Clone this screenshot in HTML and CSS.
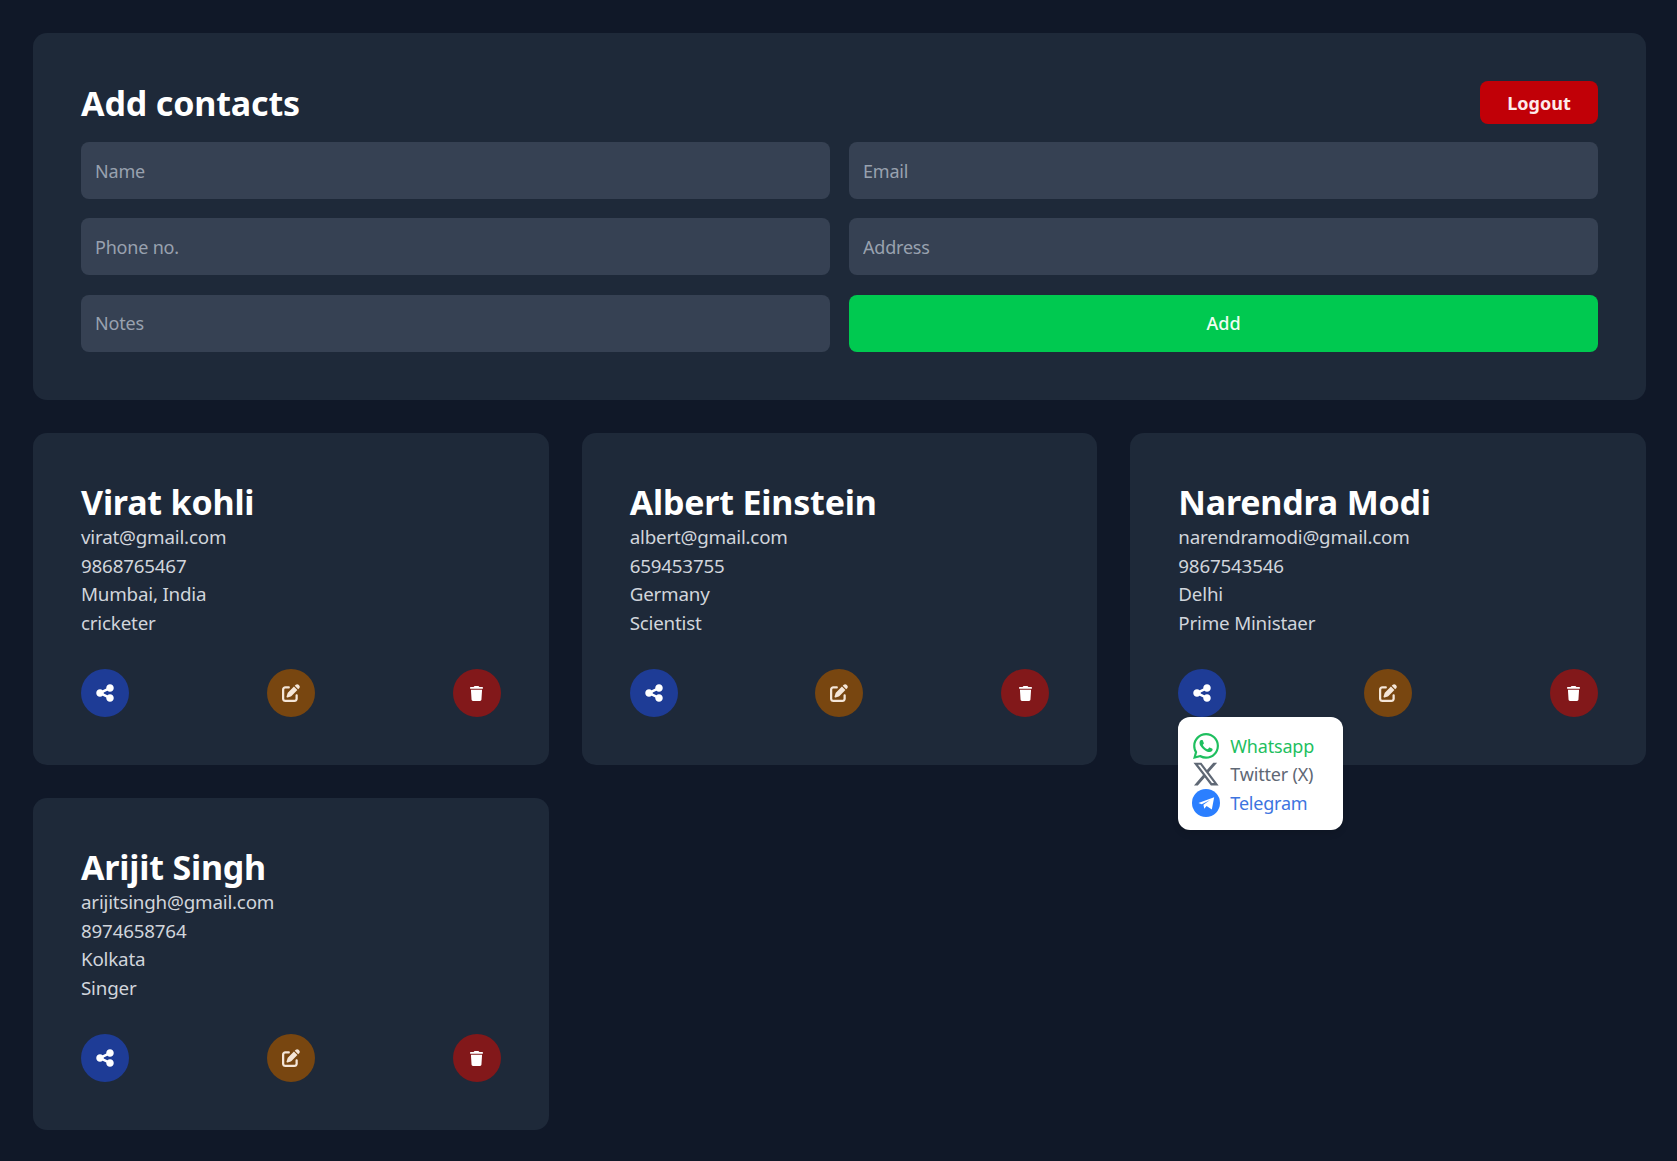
FILE: index.html
```html
<!DOCTYPE html>
<html lang="en">
<head>
<meta charset="utf-8">
<title>Contacts</title>
<link rel="stylesheet" href="styles.css">
</head>
<body>
<svg class="defs" aria-hidden="true">
  <symbol id="i-share" viewBox="0 0 448 512"><path d="M352 224c53 0 96-43 96-96s-43-96-96-96s-96 43-96 96c0 4 .2 8 .7 11.9l-94.1 47C145.4 170.2 121.9 160 96 160c-53 0-96 43-96 96s43 96 96 96c25.9 0 49.4-10.2 66.6-26.9l94.1 47c-.5 3.9-.7 7.8-.7 11.9c0 53 43 96 96 96s96-43 96-96s-43-96-96-96c-25.9 0-49.4 10.2-66.6 26.9l-94.1-47c.5-3.9 .7-7.8 .7-11.9s-.2-8-.7-11.9l94.1-47C302.6 213.8 326.1 224 352 224z"/></symbol>
  <symbol id="i-edit" viewBox="0 0 512 512"><path d="M471.6 21.7c-21.9-21.9-57.3-21.9-79.2 0L362.3 51.7l97.9 97.9 30.1-30.1c21.9-21.9 21.9-57.3 0-79.2L471.6 21.7zm-299.2 220c-6.1 6.1-10.8 13.6-13.5 21.9l-29.6 88.8c-2.9 8.6-.6 18.1 5.8 24.6s15.9 8.7 24.6 5.8l88.8-29.6c8.2-2.7 15.7-7.4 21.9-13.5L437.7 172.3 339.7 74.3 172.4 241.7zM96 64C43 64 0 107 0 160V416c0 53 43 96 96 96H352c53 0 96-43 96-96V320c0-17.7-14.3-32-32-32s-32 14.3-32 32v96c0 17.7-14.3 32-32 32H96c-17.7 0-32-14.3-32-32V160c0-17.7 14.3-32 32-32h96c17.7 0 32-14.3 32-32s-14.3-32-32-32H96z"/></symbol>
  <symbol id="i-trash" viewBox="0 0 448 512"><path d="M135.2 17.7L128 32H32C14.3 32 0 46.3 0 64S14.3 96 32 96H416c17.7 0 32-14.3 32-32s-14.3-32-32-32H320l-7.2-14.3C307.4 6.8 296.3 0 284.2 0H163.8c-12.1 0-23.2 6.8-28.6 17.7zM416 128H32L53.2 467c1.6 25.3 22.6 45 47.9 45H346.9c25.3 0 46.3-19.7 47.9-45L416 128z"/></symbol>
  <symbol id="i-whatsapp" viewBox="0 0 24 24"><path d="M17.472 14.382c-.297-.149-1.758-.867-2.03-.967-.273-.099-.471-.148-.67.15-.197.297-.767.966-.94 1.164-.173.199-.347.223-.644.075-.297-.15-1.255-.463-2.39-1.475-.883-.788-1.48-1.761-1.653-2.059-.173-.297-.018-.458.13-.606.134-.133.298-.347.446-.52.149-.174.198-.298.298-.497.099-.198.05-.371-.025-.52-.075-.149-.669-1.612-.916-2.207-.242-.579-.487-.5-.669-.51-.173-.008-.371-.01-.57-.01-.198 0-.52.074-.792.372-.272.297-1.04 1.016-1.04 2.479 0 1.462 1.065 2.875 1.213 3.074.149.198 2.096 3.2 5.077 4.487.709.306 1.262.489 1.694.625.712.227 1.36.195 1.871.118.571-.085 1.758-.719 2.006-1.413.248-.694.248-1.289.173-1.413-.074-.124-.272-.198-.57-.347m-5.421 7.403h-.004a9.87 9.87 0 01-5.031-1.378l-.361-.214-3.741.982.998-3.648-.235-.374a9.86 9.86 0 01-1.51-5.26c.001-5.45 4.436-9.884 9.888-9.884 2.64 0 5.122 1.03 6.988 2.898a9.825 9.825 0 012.893 6.994c-.003 5.45-4.437 9.884-9.885 9.884m8.413-18.297A11.815 11.815 0 0012.05 0C5.495 0 .16 5.335.157 11.892c0 2.096.547 4.142 1.588 5.945L.057 24l6.305-1.654a11.882 11.882 0 005.683 1.448h.005c6.554 0 11.89-5.335 11.893-11.893a11.821 11.821 0 00-3.48-8.413Z"/></symbol>
  <symbol id="i-x" viewBox="0 0 24 24"><path d="M18.244 2.25h3.308l-7.227 8.26 8.502 11.24H16.17l-5.214-6.817L4.99 21.75H1.68l7.73-8.835L1.254 2.25H8.08l4.713 6.231zm-1.161 17.52h1.833L7.084 4.126H5.117z"/></symbol>
  <symbol id="i-telegram" viewBox="0 0 24 24"><circle cx="12" cy="12" r="12"/><path fill="#fff" d="M5.5 12 19 7 17 17.5 12.5 14.5 10.5 17 9.8 13.6 15.5 9.5 8.3 13z"/></symbol>
</svg>

<main class="page">
  <section class="panel form-panel">
    <header class="form-head">
      <h1 class="form-title">Add contacts</h1>
      <button class="logout" type="button">Logout</button>
    </header>
    <form class="form-grid">
      <input class="field" type="text" placeholder="Name">
      <input class="field" type="text" placeholder="Email">
      <input class="field" type="text" placeholder="Phone no.">
      <input class="field" type="text" placeholder="Address">
      <input class="field" type="text" placeholder="Notes">
      <button class="add" type="button">Add</button>
    </form>
  </section>

  <section class="cards">
    <article class="panel card">
      <h2 class="name">Virat kohli</h2>
      <p class="line">virat@gmail.com</p>
      <p class="line">9868765467</p>
      <p class="line">Mumbai, India</p>
      <p class="line">cricketer</p>
      <div class="actions">
        <button class="round share" type="button" aria-label="Share"><svg class="ico"><use href="#i-share"/></svg></button>
        <button class="round edit" type="button" aria-label="Edit"><svg class="ico"><use href="#i-edit"/></svg></button>
        <button class="round del" type="button" aria-label="Delete"><svg class="ico"><use href="#i-trash"/></svg></button>
      </div>
    </article>

    <article class="panel card">
      <h2 class="name">Albert Einstein</h2>
      <p class="line">albert@gmail.com</p>
      <p class="line">659453755</p>
      <p class="line">Germany</p>
      <p class="line">Scientist</p>
      <div class="actions">
        <button class="round share" type="button" aria-label="Share"><svg class="ico"><use href="#i-share"/></svg></button>
        <button class="round edit" type="button" aria-label="Edit"><svg class="ico"><use href="#i-edit"/></svg></button>
        <button class="round del" type="button" aria-label="Delete"><svg class="ico"><use href="#i-trash"/></svg></button>
      </div>
    </article>

    <article class="panel card">
      <h2 class="name">Narendra Modi</h2>
      <p class="line">narendramodi@gmail.com</p>
      <p class="line">9867543546</p>
      <p class="line">Delhi</p>
      <p class="line">Prime Ministaer</p>
      <div class="actions">
        <div class="share-wrap">
          <button class="round share" type="button" aria-label="Share"><svg class="ico"><use href="#i-share"/></svg></button>
          <ul class="menu">
            <li class="menu-item wa"><svg class="menu-ico"><use href="#i-whatsapp"/></svg>Whatsapp</li>
            <li class="menu-item tw"><svg class="menu-ico"><use href="#i-x"/></svg>Twitter (X)</li>
            <li class="menu-item tg"><svg class="menu-ico"><use href="#i-telegram"/></svg>Telegram</li>
          </ul>
        </div>
        <button class="round edit" type="button" aria-label="Edit"><svg class="ico"><use href="#i-edit"/></svg></button>
        <button class="round del" type="button" aria-label="Delete"><svg class="ico"><use href="#i-trash"/></svg></button>
      </div>
    </article>

    <article class="panel card">
      <h2 class="name">Arijit Singh</h2>
      <p class="line">arijitsingh@gmail.com</p>
      <p class="line">8974658764</p>
      <p class="line">Kolkata</p>
      <p class="line">Singer</p>
      <div class="actions">
        <button class="round share" type="button" aria-label="Share"><svg class="ico"><use href="#i-share"/></svg></button>
        <button class="round edit" type="button" aria-label="Edit"><svg class="ico"><use href="#i-edit"/></svg></button>
        <button class="round del" type="button" aria-label="Delete"><svg class="ico"><use href="#i-trash"/></svg></button>
      </div>
    </article>
  </section>
</main>
</body>
</html>
```

FILE: styles.css
```css
* { box-sizing: border-box; }
html, body { margin: 0; padding: 0; }
body {
  background: #101828;
  color: #fff;
  font-family: "Noto Sans", "Open Sans", sans-serif;
  min-height: 1161px;
}
.defs { display: none; }
.page {
  padding: 33px 31px 31px 33px;
  display: flex;
  flex-direction: column;
  gap: 33.5px;
}
.panel {
  background: #1e2939;
  border-radius: 14px;
  padding: 48px;
}
.form-panel { height: 366.5px; }
.form-head {
  display: flex;
  justify-content: space-between;
  align-items: center;
  height: 43px;
  margin-bottom: 18px;
}
.form-title {
  margin: 0;
  padding-top: 1px;
  font-size: 34px;
  line-height: 43px;
  font-weight: 700;
  letter-spacing: -0.15px;
}
.logout {
  width: 118px;
  height: 43px;
  border: 0;
  border-radius: 8px;
  background: #c10007;
  color: #fdeaea;
  font: 700 18px/1 "Noto Sans", sans-serif;
}
.form-grid {
  display: grid;
  grid-template-columns: 1fr 1fr;
  grid-auto-rows: 57px;
  gap: 19.25px 19px;
}
.field {
  width: 100%;
  border: 0;
  border-radius: 8px;
  background: #364153;
  color: #fff;
  padding: 0 14px;
  font: 400 18px "Noto Sans", sans-serif;
  letter-spacing: -0.2px;
}
.field::placeholder { color: #99a1af; opacity: 1; }
.add {
  border: 0;
  border-radius: 8px;
  background: #00c950;
  color: #f0fdf4;
  font: 500 18px "Noto Sans", sans-serif;
}
.cards {
  display: grid;
  grid-template-columns: repeat(3, 1fr);
  gap: 33.5px 33px;
  align-items: start;
}
.card { height: 331.5px; }
.name {
  margin: 0;
  font-size: 34px;
  line-height: 42px;
  font-weight: 700;
  letter-spacing: -0.2px;
}
.line {
  margin: 0;
  font-size: 18.8px;
  line-height: 28.7px;
  color: #d1d5dc;
  letter-spacing: -0.2px;
}
.actions {
  display: flex;
  justify-content: space-between;
  margin-top: 31.4px;
}
.share-wrap { position: relative; width: 48px; height: 48px; }
.round {
  width: 48px;
  height: 48px;
  padding: 0;
  border: 0;
  border-radius: 50%;
  display: flex;
  align-items: center;
  justify-content: center;
  color: #fff;
}
.share { background: #1e3c96; }
.edit { background: #784610; }
.del { background: #82181a; }
.ico { width: 18px; height: 18px; fill: currentColor; }
.share .ico { width: 18px; height: 20px; }
.del .ico { width: 13px; height: 15px; }
.edit .ico { color: #f5e6d8; }
.menu {
  position: absolute;
  top: 48px;
  left: 0;
  width: 165px;
  height: 113px;
  margin: 0;
  padding: 14px;
  list-style: none;
  background: #fff;
  border-radius: 12px;
  box-shadow: 0 4px 6px rgba(0, 0, 0, 0.1);
  z-index: 2;
}
.menu-item {
  display: flex;
  align-items: center;
  gap: 10px;
  height: 28.6px;
  font-size: 18px;
  letter-spacing: -0.2px;
  white-space: nowrap;
}
.menu-ico { width: 28px; height: 28px; fill: currentColor; flex: none; }
.wa { color: #1fbf5f; }
.wa .menu-ico { width: 26px; height: 26px; margin: 0 1px; }
.tw { color: #5f6875; }
.tg { color: #3d74e0; }
.tg .menu-ico { color: #2b7fff; }
```
